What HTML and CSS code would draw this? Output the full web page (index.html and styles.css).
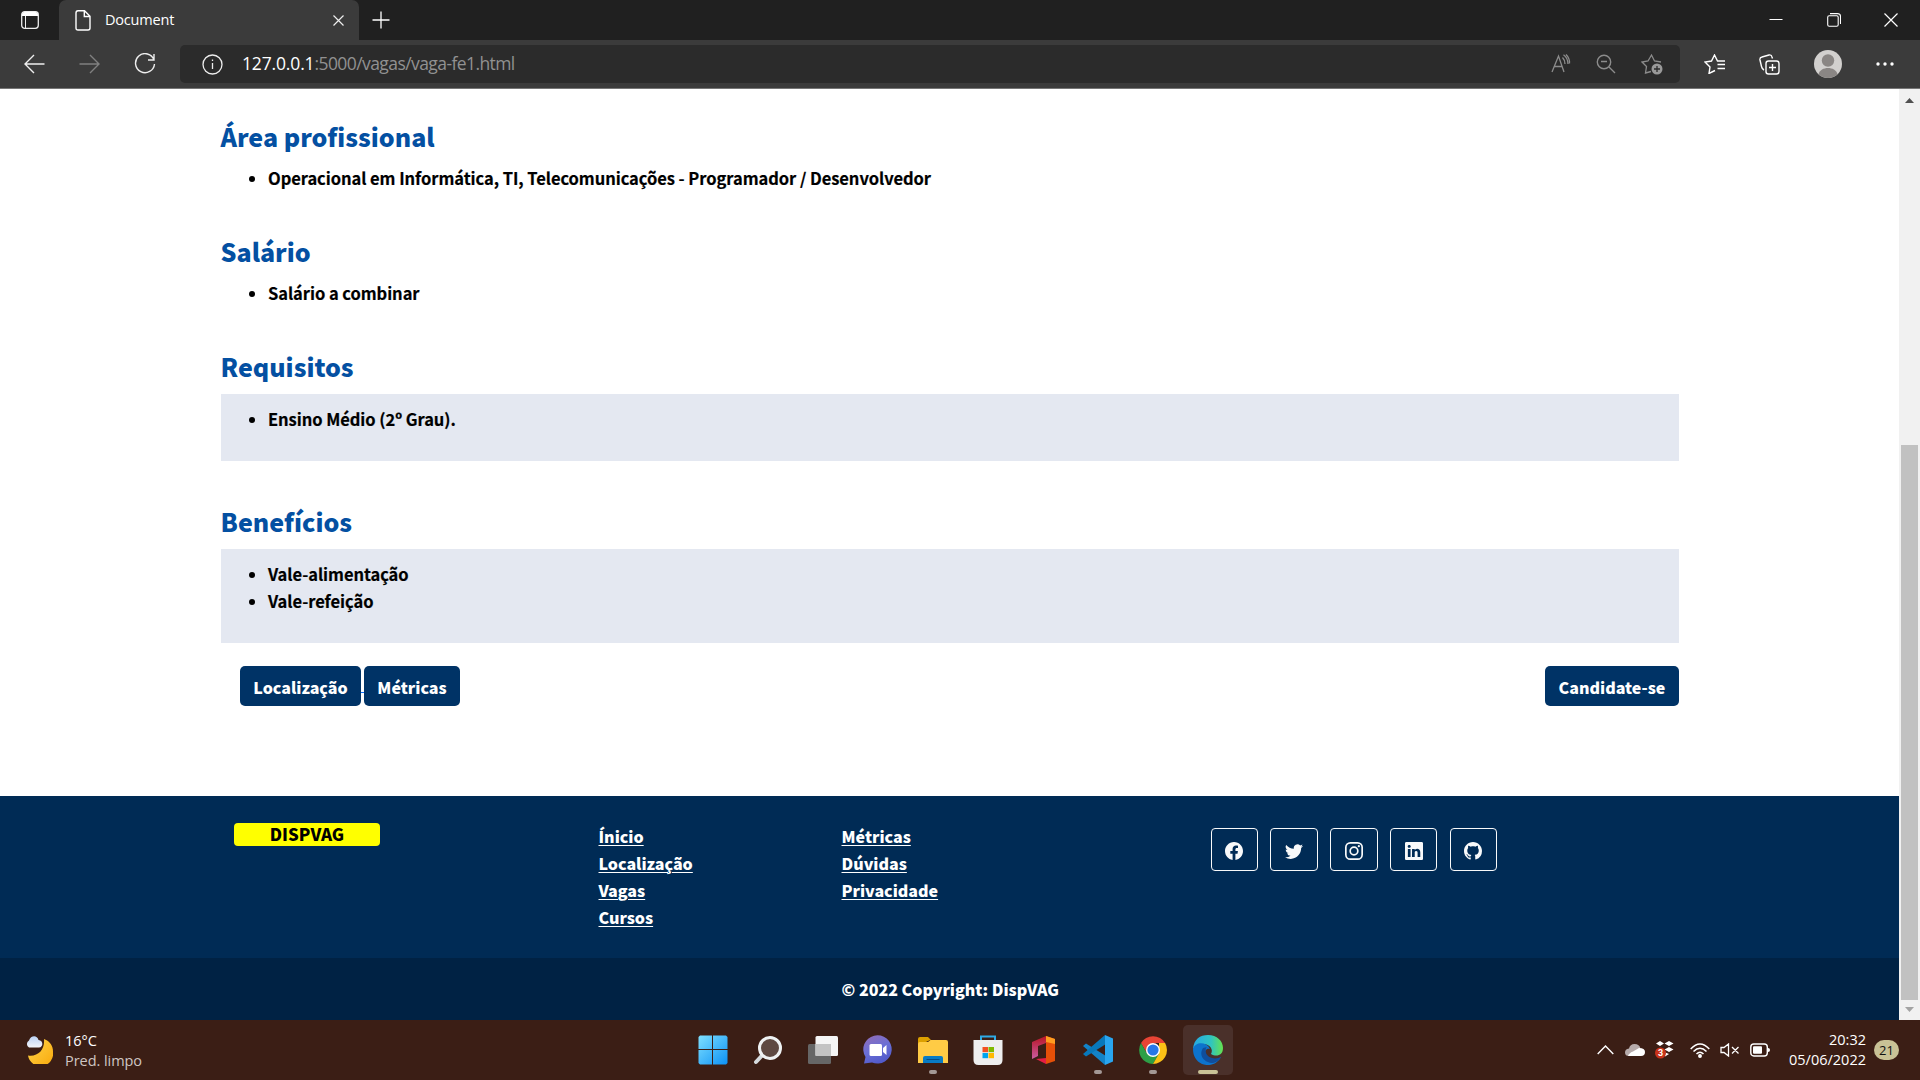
FILE: index.html
```html
<!DOCTYPE html>
<html lang="pt-BR">
<head>
<meta charset="UTF-8">
<title>Document</title>
<link rel="stylesheet" href="styles.css">
</head>
<body>
<header class="tabs">
  <svg class="tab-menu" width="18" height="18" viewBox="0 0 18 18"><rect x=".7" y=".7" width="16.6" height="16.6" rx="3" fill="none" stroke="#eee" stroke-width="1.3"/><path d="M1 5V3.500Q1 1 3.500 1h11Q17 1 17 3.500V5z" fill="#fff"/><path d="M4.500 5v12" stroke="#eee"/></svg>
  <div class="tab">
    <svg width="16" height="21" viewBox="0 0 16 21" fill="none" stroke="#fff" stroke-width="1.4"><path d="M3 .8h6.500L15 6.300V18q0 2-2 2H3q-2 0-2-2V3Q1 .8 3 .8zM9.300 1v5.500H15"/></svg>
    <span class="tab-title">Document</span>
    <svg width="11" height="11" viewBox="0 0 11 11" stroke="#eee" stroke-width="1.2"><path d="M.5.5l10 10M10.500.5l-10 10"/></svg>
  </div>
  <svg class="new-tab" width="18" height="18" viewBox="0 0 18 18" stroke="#fff" stroke-width="1.3"><path d="M9 .5v17M.5 9h17"/></svg>
  <div class="window-controls">
    <svg width="14" height="14" viewBox="0 0 14 14"><path d="M.5 6.500h13" stroke="#fff"/></svg>
    <svg width="14" height="14" viewBox="0 0 14 14" fill="none" stroke="#fff" stroke-width="1.1"><rect x=".7" y="2.700" width="10.500" height="10.500" rx="1.500"/><path d="M3 .6h7.500q3 0 3 3V11"/></svg>
    <svg width="14" height="14" viewBox="0 0 14 14" stroke="#fff" stroke-width="1.2"><path d="M.5.5l13 13M13.500.5l-13 13"/></svg>
  </div>
</header>
<nav class="toolbar">
  <div class="nav-icons">
    <svg width="21" height="20" viewBox="0 0 21 20" fill="none" stroke="#eee" stroke-width="1.4"><path d="M20.500 10H1M10 1L1 10l9 9"/></svg>
    <svg width="21" height="20" viewBox="0 0 21 20" fill="none" stroke="#808080" stroke-width="1.4"><path d="M.5 10H20M11 1l9 9-9 9"/></svg>
    <svg width="22" height="22" viewBox="0 0 22 22" fill="none" stroke="#eee" stroke-width="1.4"><path d="M20 7A9.500 9.500 0 1 0 20.500 11M20 1v6h-6"/></svg>
  </div>
  <div class="address">
    <svg width="21" height="21" viewBox="0 0 21 21" fill="none" stroke="#eee" stroke-width="1.3"><circle cx="10.500" cy="10.500" r="9.500"/><path d="M10.500 9v6M10.500 5.500V7"/></svg>
    <span class="url"><b class="host">127.0.0.1</b>:5000/vagas/vaga-fe1.html</span>
    <div class="address-tools">
      <svg width="20" height="20" viewBox="0 0 20 20" fill="none" stroke="#8c8c8c" stroke-width="1.300"><path d="M1 18L7.500 2 13 18M3.200 12.500h8M11.500 3.500Q14 6 14 10M12.500.7Q17 4 17 10M15 .5q4 4 3.500 9"/></svg>
      <svg width="20" height="20" viewBox="0 0 20 20" fill="none" stroke="#8c8c8c" stroke-width="1.400"><circle cx="8" cy="8" r="6.700"/><path d="M13 13l6 6M5 7.500h6"/></svg>
      <svg width="22" height="22" viewBox="0 0 22 22" fill="none" stroke="#8c8c8c" stroke-width="1.300"><path d="M10 18.500l-5.500 1.500 1-6.500-4.500-4.500 6-1L10.500 2l3 6 6.500 1"/><circle cx="16" cy="16" r="5.500" fill="#999" stroke="none"/><path d="M16 13v6M13 16h6" stroke="#2b2b2b"/></svg>
    </div>
  </div>
  <div class="actions">
    <svg width="21" height="20" viewBox="0 0 21 20" fill="none" stroke="#fff" stroke-width="1.400"><path d="M11 16.500l-6 3 1-6.500-5-5 6.500-1L10.500 1l3 6h4M13.500 10.500H21M13.500 7H21M13.500 14.500H21"/></svg>
    <svg width="21" height="21" viewBox="0 0 21 21" fill="none" stroke="#fff" stroke-width="1.400"><rect x="7" y="7" width="13" height="13" rx="2.500"/><path d="M13.500 10v7M10 13.500h7M5 16Q3 15 2.500 12.500L1 6Q.5 3.500 3 3l7-2q2.500-.5 3 2l.5 1.500"/></svg>
    <svg width="28" height="28" viewBox="0 0 28 28"><circle cx="14" cy="14" r="14" fill="#d2d0ce"/><circle cx="14" cy="10.500" r="6.200" fill="#8a8684"/><path d="M4.500 24.200C6.500 16 21.500 16 23.500 24.200A14 14 0 0 1 4.500 24.200z" fill="#8a8684"/></svg>
    <svg width="18" height="4" viewBox="0 0 18 4" fill="#fff"><circle cx="2" cy="2" r="1.700"/><circle cx="9" cy="2" r="1.700"/><circle cx="16" cy="2" r="1.700"/></svg>
  </div>
</nav>
<div class="viewport">
  <div class="page">
    <main class="content">
      <section class="block"><h2>Área profissional</h2><ul><li>Operacional em Informática, TI, Telecomunicações - Programador / Desenvolvedor</li></ul></section>
      <section class="block"><h2>Salário</h2><ul><li>Salário a combinar</li></ul></section>
      <section class="block block-req"><h2>Requisitos</h2><ul class="shaded"><li>Ensino Médio (2º Grau).</li></ul></section>
      <section class="block"><h2>Benefícios</h2><ul class="shaded"><li>Vale-alimentação</li><li>Vale-refeição</li></ul></section>
      <div class="buttons"><a class="btn btn-loc">Localização</a><span class="gap-link"></span><a class="btn btn-met">Métricas</a><a class="btn btn-apply">Candidate-se</a></div>
    </main>
    <footer class="footer">
      <div class="badge">DISPVAG</div>
      <div class="links links-a"><a>Ínicio</a><a>Localização</a><a>Vagas</a><a>Cursos</a></div>
      <div class="links links-b"><a>Métricas</a><a>Dúvidas</a><a>Privacidade</a></div>
      <div class="social">
        <span><svg viewBox="0 0 16 16"><path d="M16 8.049c0-4.446-3.582-8.050-8-8.050C3.580 0-.002 3.603-.002 8.050c0 4.017 2.926 7.347 6.750 7.951v-5.625h-2.030V8.050H6.750V6.275c0-2.017 1.195-3.131 3.022-3.131.876 0 1.791.157 1.791.157v1.980h-1.009c-.993 0-1.303.621-1.303 1.258v1.510h2.218l-.354 2.326H9.250V16c3.824-.604 6.750-3.934 6.750-7.951z"/></svg></span>
        <span><svg viewBox="0 0 16 16"><path d="M5.026 15c6.038 0 9.341-5.003 9.341-9.334 0-.140 0-.282-.006-.422A6.685 6.685 0 0 0 16 3.542a6.658 6.658 0 0 1-1.889.518 3.301 3.301 0 0 0 1.447-1.817 6.533 6.533 0 0 1-2.087.793A3.286 3.286 0 0 0 7.875 6.030a9.325 9.325 0 0 1-6.767-3.429 3.289 3.289 0 0 0 1.018 4.382A3.323 3.323 0 0 1 .640 6.575v.045a3.288 3.288 0 0 0 2.632 3.218 3.203 3.203 0 0 1-.865.115 3.230 3.230 0 0 1-.614-.057 3.283 3.283 0 0 0 3.067 2.277A6.588 6.588 0 0 1 .780 13.580a6.320 6.320 0 0 1-.780-.045A9.344 9.344 0 0 0 5.026 15z"/></svg></span>
        <span><svg viewBox="0 0 16 16"><rect x=".75" y=".75" width="14.500" height="14.500" rx="4" fill="none" stroke="#f8f9fa" stroke-width="1.500"/><circle cx="8" cy="8" r="3.400" fill="none" stroke="#f8f9fa" stroke-width="1.500"/><circle cx="12.300" cy="3.700" r="1"/></svg></span>
        <span><svg viewBox="0 0 16 16"><path fill-rule="evenodd" d="M0 1.146C0 .513.526 0 1.175 0h13.650C15.474 0 16 .513 16 1.146v13.708c0 .633-.526 1.146-1.175 1.146H1.175C.526 16 0 15.487 0 14.854V1.146zm4.943 12.248V6.169H2.542v7.225h2.401zm-1.200-8.212c.837 0 1.358-.554 1.358-1.248-.015-.709-.520-1.248-1.342-1.248-.822 0-1.359.540-1.359 1.248 0 .694.521 1.248 1.327 1.248h.016zm4.908 8.212V9.359c0-.216.016-.432.080-.586.173-.431.568-.878 1.232-.878.869 0 1.216.662 1.216 1.634v3.865h2.401V9.250c0-2.220-1.184-3.252-2.764-3.252-1.274 0-1.845.700-2.165 1.193v.025h-.016a5.540 5.540 0 0 1 .016-.025V6.169h-2.400c.030.678 0 7.225 0 7.225h2.400z"/></svg></span>
        <span><svg viewBox="0 0 16 16"><path d="M8 0C3.580 0 0 3.580 0 8c0 3.540 2.290 6.530 5.470 7.590.4.070.55-.17.55-.38 0-.19-.01-.82-.01-1.490-2.010.37-2.530-.49-2.690-.94-.09-.23-.48-.94-.82-1.130-.28-.15-.68-.52-.01-.53.63-.01 1.080.58 1.230.82.72 1.210 1.870.87 2.330.66.070-.52.28-.87.51-1.070-1.780-.2-3.640-.89-3.640-3.950 0-.87.31-1.590.82-2.150-.08-.2-.36-1.020.08-2.120 0 0 .67-.21 2.200.82.64-.18 1.320-.27 2-.27.68 0 1.360.09 2 .27 1.530-1.040 2.200-.82 2.200-.82.44 1.100.16 1.920.08 2.120.51.56.82 1.270.82 2.150 0 3.070-1.870 3.750-3.650 3.950.29.25.54.73.54 1.480 0 1.070-.01 1.930-.01 2.200 0 .21.15.46.55.38A8.012 8.012 0 0 0 16 8c0-4.420-3.580-8-8-8z"/></svg></span>
      </div>
    </footer>
    <div class="copyright">© 2022 Copyright: DispVAG</div>
  </div>
  <aside class="scrollbar">
    <svg width="9" height="5" viewBox="0 0 9 5"><path d="M0 5L4.500 0 9 5z" fill="#505050"/></svg>
    <div class="thumb"></div>
    <svg width="9" height="5" viewBox="0 0 9 5"><path d="M0 0h9L4.500 5z" fill="#a3a3a3"/></svg>
  </aside>
</div>
<div class="taskbar">
  <div class="weather">
    <svg width="28" height="28" viewBox="0 0 28 28"><defs><linearGradient id="moon" x2="1" y2="1"><stop stop-color="#ffd54a"/><stop offset="1" stop-color="#f9a90c"/></linearGradient><linearGradient id="cloud" x2="0" y2="1"><stop stop-color="#bcd3f5"/><stop offset="1" stop-color="#f3f5fa"/></linearGradient></defs><path d="M19 3C25 5 28 10 28 15.500A12.500 12.500 0 0 1 3 19.500C13 21 20 14 19 3z" fill="url(#moon)"/><path d="M4 11.500a4 4 0 0 1 0-7C5.500-.5 12-1.500 13.500 4c5 .5 5 7 .5 7.500z" fill="url(#cloud)"/></svg>
    <div class="weather-text"><span>16°C</span><span class="dim">Pred. limpo</span></div>
  </div>
  <div class="apps">
    <span class="app"><svg width="30" height="30" viewBox="0 0 30 30"><defs><linearGradient id="win" x2="1" y2="1" gradientUnits="objectBoundingBox"><stop stop-color="#7fe0ff"/><stop offset="1" stop-color="#0c91f5"/></linearGradient></defs><path fill="url(#win)" d="M2 .5h12v13.500H.5V2zM15 .5h13l1.500 1.500v12H15zM.5 15H14v14.500H2L.5 28zM15 15h14.500v13l-1.500 1.500H15z"/></svg></span>
    <span class="app"><svg width="30" height="30" viewBox="0 0 30 30"><path d="M9.500 20L3 27" stroke="#d5dadd" stroke-width="4" stroke-linecap="round"/><circle cx="17" cy="13" r="10.500" fill="#5e4942" stroke="#eff2f3" stroke-width="3"/></svg></span>
    <span class="app"><svg width="30" height="30" viewBox="0 0 30 30"><rect x="0" y="9" width="23" height="20" rx="1.500" fill="#666"/><rect x="7.500" y="1" width="22.500" height="20" rx="1.500" fill="#f5f5f5"/><path d="M7.500 9H23v12H7.500z" fill="#c3c3c3"/></svg></span>
    <span class="app"><svg width="30" height="30" viewBox="0 0 30 30"><defs><linearGradient id="chat" x1=".2" y1="0" x2=".6" y2="1"><stop stop-color="#8f6db8"/><stop offset=".5" stop-color="#6a6fd6"/><stop offset="1" stop-color="#5059c9"/></linearGradient></defs><path d="M1 28.500L2.500 22A14.200 14.200 0 1 1 9 27.500z" fill="url(#chat)"/><rect x="6.500" y="9" width="12.500" height="12" rx="1.500" fill="#fff"/><path d="M20 13l3.500-3v10L20 17z" fill="#fff"/></svg></span>
    <span class="app"><svg width="30" height="30" viewBox="0 0 30 30"><path d="M0 4Q0 2 2 2h8l3 3h-1L0 11z" fill="#dca000"/><path d="M0 9Q0 7 2 7h8l2.500-2H28q2 0 2 2v21H0z" fill="#ffcb45"/><path d="M5 28v-5q0-2 2-2h16q2 0 2 2v5z" fill="#087bc4"/><path d="M8.500 24.500h13" stroke="#064c86"/></svg><i></i></span>
    <span class="app"><svg width="30" height="30" viewBox="0 0 30 30"><path d="M8 6V1.500h14V6" fill="none" stroke="#2eaae5" stroke-width="2"/><path d="M.5 5h29v20q0 5-5 5h-19q-5 0-5-5z" fill="#eee"/><path d="M9.500 12H15v5.200H9.500z" fill="#f25022"/><path d="M15.500 12H21v5.200h-5.500z" fill="#7fba00"/><path d="M9.500 18H15v5.200H9.500z" fill="#00a4ef"/><path d="M15.500 18H21v5.200h-5.500z" fill="#ffb900"/></svg></span>
    <span class="app"><svg width="30" height="30" viewBox="0 0 30 30"><defs><linearGradient id="off" x2="0" y2="1"><stop stop-color="#b81424"/><stop offset="1" stop-color="#cc5da1"/></linearGradient></defs><path d="M4 7L18 1v7l-8 3v10l-6 3z" fill="url(#off)"/><path d="M18 1l9 3v22l-9 3z" fill="#e65008"/><path d="M18 1l9 3v5l-9-2z" fill="#ff9c20"/><path d="M8 24l10-1v6z" fill="#e51e43"/></svg></span>
    <span class="app"><svg width="30" height="30" viewBox="0 0 30 30"><path d="M3 8.500L0 11l22 19 1-9z" fill="#1383c8"/><path d="M3 21.500L0 19 22 0l1 9z" fill="#0878bb"/><path d="M22 0l8 3.500v23L22 30z" fill="#29a5ef"/></svg><i></i></span>
    <span class="app"><svg width="30" height="30" viewBox="0 0 30 30"><path d="M3 8A14 14 0 0 1 27.100 8H15L9 18.500z" fill="#e84435"/><path d="M3 8A14 14 0 0 0 15 29l6-10.500H9z" fill="#2d9f46"/><path d="M27.100 8A14 14 0 0 1 15 29l6-10.500L21 8z" fill="#fbc116"/><circle cx="15" cy="15" r="7" fill="#fff"/><circle cx="15" cy="15" r="5.600" fill="#2877e8"/></svg><i></i></span>
    <span class="app active"><svg width="30" height="30" viewBox="0 0 30 30"><defs><linearGradient id="edge"><stop stop-color="#25a8e5"/><stop offset=".6" stop-color="#30c4c0"/><stop offset="1" stop-color="#65e34e"/></linearGradient></defs><path d="M0 14C1 4 7 0 15 0c9 0 15 6 15 13 0 8-7 9-12 6 3-5-2-11-9-10Q3 10 0 14z" fill="url(#edge)"/><path d="M0 14c2-7 13-8 17 0-5-2-7 6-4 9 4 5 11 3 15-1C23 31 14 31 9 29 3 26 0 21 0 14z" fill="#0d73cc"/><path d="M10 13c-5 8 2 15 10 15q5-1 8-6c-6 3-13 1-15-4q-1-5 1-6z" fill="#104e9c"/></svg><i></i></span>
  </div>
  <div class="tray">
    <svg width="17" height="10" viewBox="0 0 17 10" fill="none" stroke="#fff" stroke-width="1.400"><path d="M.7 9L8.500 1 16.300 9"/></svg>
    <svg class="t-cloud" width="20" height="14" viewBox="0 0 20 14"><path d="M4 13Q0 13 0 9.500T4 5.500Q5 1 9.500 1q5 0 6 4.500l-11 7.500z" fill="#b6abab"/><path d="M3 13q1-3 5-4.500L14 5q6 0 6 4t-4 4z" fill="#fff"/></svg>
    <svg class="t-drop" width="19" height="18" viewBox="0 0 19 18"><path d="M5 0l4 2.500-4 2.500-4-2.500zM14 0l4.500 2.500L14 5 9.500 2.500zM14 6l4.500 2.500L14 11 9.500 8.500zM9 11l5 2-4 2.500z" fill="#fff"/><circle cx="5.500" cy="12" r="5.500" fill="#c9341b"/><text x="5.500" y="15.200" text-anchor="middle" class="drop-count">3</text></svg>
    <svg class="t-wifi" width="20" height="15" viewBox="0 0 20 15" fill="none" stroke="#fff" stroke-width="1.500"><path d="M.7 6Q10-4 19.300 6M3.500 8.500q6.500-6.500 13 0M6.500 11q3.500-3.500 7 0"/><circle cx="10" cy="13" r="1.200" fill="#fff"/></svg>
    <svg class="t-vol" width="20" height="14" viewBox="0 0 20 14" fill="none" stroke="#fff" stroke-width="1.300"><path d="M1 4.500h3L8.500 1v12L4 9.500H1zM12 4l6.500 6.500M18.500 4L12 10.500"/></svg>
    <svg class="t-bat" width="20" height="14" viewBox="0 0 20 14"><rect x=".8" y="1" width="16.500" height="12" rx="3" fill="none" stroke="#fff" stroke-width="1.400"/><rect x="3" y="3.200" width="9" height="7.600" rx="1" fill="#fff"/><path d="M18 5q2 0 2 2t-2 2z" fill="#fff"/></svg>
    <div class="clock"><span>20:32</span><span>05/06/2022</span></div>
    <span class="notif">21</span>
  </div>
</div>
</body>
</html>
```
FILE: styles.css
```css
* { box-sizing: border-box; }
body { margin: 0; width: 1920px; height: 1080px; overflow: hidden; display: flex; flex-direction: column; font-family: "Open Sans", "Noto Sans", sans-serif; color: #fff; }
svg { display: block; flex: none; }
span, a { white-space: nowrap; }

.tabs { height: 40px; background: #202020; display: flex; align-items: center; padding-left: 21px; }
.tab { width: 300px; height: 40px; margin-left: 20px; background: #3b3b3b; border-radius: 7px 7px 0 0; display: flex; align-items: center; padding: 0 15px 0 16px; }
.tab-title { flex: 1; margin-left: 14px; padding-bottom: 2px; font-size: 14.500px; letter-spacing: -.2px; }
.new-tab { margin-left: 13px; }
.window-controls { margin-left: auto; display: flex; gap: 43.500px; padding-right: 22px; }

.toolbar { height: 49px; background: #3b3b3b; border-bottom: 1px solid #767676; display: flex; align-items: center; }
.nav-icons { width: 180px; padding-left: 24px; display: flex; align-items: center; gap: 34px; }
.address { width: 1500px; height: 38px; border-radius: 5px; background: #2b2b2b; display: flex; align-items: center; padding-left: 22px; }
.url { margin-left: 19px; padding-bottom: 2px; font-size: 17.500px; color: #919191; letter-spacing: -.58px; }
.host { font-weight: 400; color: #fff; letter-spacing: -.15px; }
.address-tools { margin-left: auto; display: flex; align-items: center; gap: 25px; padding-right: 17px; }
.actions { display: flex; align-items: center; padding-left: 24px; gap: 34px; }

.viewport { height: 931px; display: flex; background: #fff; }
.page { width: 1899px; display: flex; flex-direction: column; font-family: "Noto Sans CJK JP", "Noto Sans", sans-serif; font-weight: 900; font-size: 16px; line-height: 27px; }
.content { height: 707px; padding: 30px 220px 0 220.500px; color: #000; }
.block { margin-bottom: 46px; }
.block-req { margin-bottom: 43px; }
h2 { margin: 0; height: 45px; font-size: 25px; line-height: 34px; font-weight: 900; color: #0450a2; }
ul { margin: 0; padding: 0 0 0 47.500px; height: 24px; font-size: 16.500px; font-weight: 700; line-height: 28px; letter-spacing: -.05px; -webkit-text-stroke: .2px #000; }
li { white-space: nowrap; height: 27px; }
.shaded { height: auto; padding-top: 11px; padding-bottom: 29px; background: #e4e8f1; }
.buttons { display: flex; margin-top: -23px; padding-left: 19.500px; }
.btn { height: 40px; border-radius: 5px; background: #003366; color: #fff; line-height: 42px; text-align: center; }
.btn-loc { width: 121px; }
.btn-met { width: 96px; }
.btn-apply { width: 134px; margin-left: auto; }
.gap-link { width: 3px; height: 27px; border-bottom: 1px solid #0d6efd; }

.footer { height: 162px; background: #002b55; display: flex; padding: 27px 0 0 234px; }
.badge { width: 146px; height: 23px; background: #ff0; color: #000; border-radius: 4px; font-size: 16.900px; line-height: 22px; text-align: center; }
.links { display: flex; flex-direction: column; align-items: flex-start; }
.links a { text-decoration: underline 1px #fff; text-underline-offset: 2px; }
.links-a { width: 243px; margin-left: 218.500px; }
.links-b { width: 369px; }
.social { display: flex; gap: 12.300px; padding-top: 5px; }
.social span { width: 47.500px; height: 43px; border: 1px solid #f8f9fa; border-radius: 4px; display: flex; justify-content: center; padding-top: 13px; }
.social svg { width: 18px; height: 18px; fill: #f8f9fa; }
.copyright { height: 62px; background: #002244; padding-left: 841.500px; line-height: 63px; }

.scrollbar { width: 21px; background: #f1f1f1; display: flex; flex-direction: column; align-items: center; padding: 9px 0 8px; }
.thumb { width: 17px; height: 555px; margin: 342px 0 auto; background: #c1c1c1; }

.taskbar { height: 60px; background: #3b1e15; display: flex; align-items: center; }
.weather { width: 696px; padding-left: 25px; display: flex; align-items: center; gap: 12px; font-size: 14.500px; line-height: 20px; }
.weather-text { display: flex; flex-direction: column; padding-top: 2px; letter-spacing: -.05px; }
.dim { color: #cfc6c3; }
.apps { display: flex; gap: 5px; margin-left: -8px; }
.app { width: 50px; height: 50px; display: flex; justify-content: center; align-items: center; position: relative; border-radius: 5px; }
.app i { position: absolute; bottom: 1px; left: 21px; width: 8px; height: 4px; border-radius: 2px; background: #a39895; }
.app.active { background: #4a302a; }
.app.active i { width: 20px; left: 15px; background: #c9c296; }
.tray { margin-left: auto; display: flex; align-items: center; padding-right: 21px; }
.t-cloud { margin-left: 11px; }
.t-drop { margin-left: 10px; }
.drop-count { font: 700 9px Roboto, sans-serif; fill: #fff; }
.t-wifi { margin-left: 16px; }
.t-vol { margin-left: 10px; }
.t-bat { margin-left: 10px; }
.clock { width: 96px; display: flex; flex-direction: column; text-align: right; font-size: 14.500px; line-height: 20px; }
.notif { width: 25px; height: 20px; margin-left: 8px; border-radius: 10px; background: #c9c296; color: #111; font-size: 13px; line-height: 21px; text-align: center; }
```
